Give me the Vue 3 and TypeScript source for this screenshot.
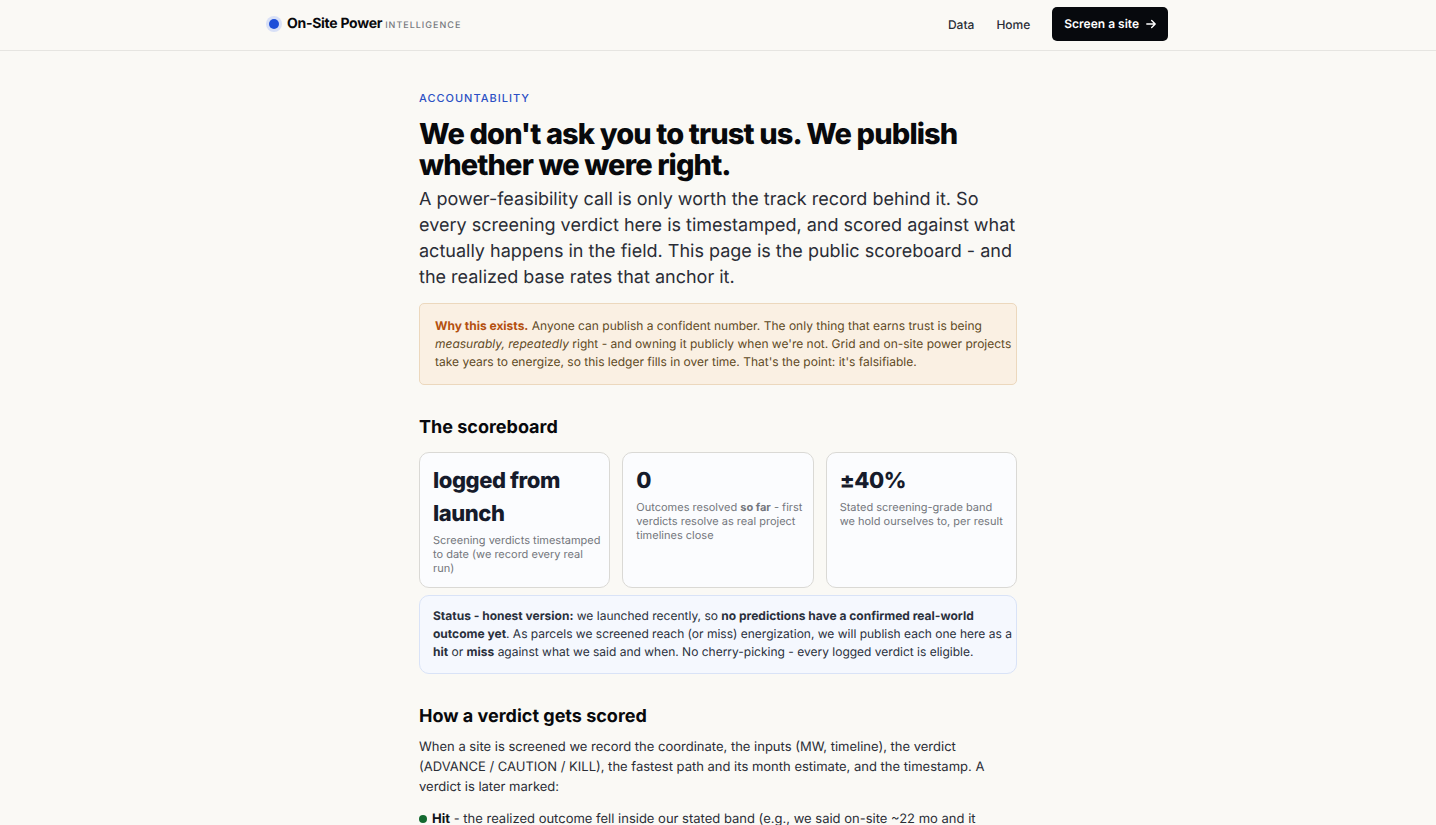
<script setup lang="ts">
interface Segment {
  text: string
  strong?: boolean
}

interface Stat {
  value: string
  label: Segment[]
}

const stats: Stat[] = [
  {
    value: 'logged from launch',
    label: [{ text: 'Screening verdicts timestamped to date (we record every real run)' }],
  },
  {
    value: '0',
    label: [
      { text: 'Outcomes resolved ' },
      { text: 'so far', strong: true },
      { text: ' - first verdicts resolve as real project timelines close' },
    ],
  },
  {
    value: '±40%',
    label: [{ text: 'Stated screening-grade band we hold ourselves to, per result' }],
  },
]
</script>

<template>
  <div class="page">
    <header class="site-header">
      <div class="header-inner">
        <a class="brand" href="#">
          <span class="brand-dot"></span>
          <span class="brand-text">
            <span class="brand-name">On-Site Power</span>
            <span class="brand-sub">Intelligence</span>
          </span>
        </a>
        <nav class="nav">
          <a class="nav-link" href="#">Data</a>
          <a class="nav-link" href="#">Home</a>
          <a class="cta" href="#">
            Screen a site
            <svg class="arrow" viewBox="0 0 10 10" aria-hidden="true">
              <path d="M0.8 5H9.2M5.7 1.6L9.2 5L5.7 8.4" />
            </svg>
          </a>
        </nav>
      </div>
    </header>

    <main class="content">
      <p class="eyebrow">Accountability</p>
      <h1>We don't ask you to trust us. We publish whether we were right.</h1>
      <p class="lead">
        A power-feasibility call is only worth the track record behind it. So every screening verdict
        here is timestamped, and scored against what actually happens in the field. This page is the
        public scoreboard - and the realized base rates that anchor it.
      </p>

      <p class="callout">
        <strong>Why this exists.</strong> Anyone can publish a confident number. The only thing that
        earns trust is being <em>measurably, repeatedly</em> right - and owning it publicly when we're
        not. Grid and on-site power projects take years to energize, so this ledger fills in over time.
        That's the point: it's falsifiable.
      </p>

      <section>
        <h2>The scoreboard</h2>
        <div class="stats">
          <div v-for="stat in stats" :key="stat.value" class="stat">
            <div class="stat-value">{{ stat.value }}</div>
            <div class="stat-label">
              <template v-for="part in stat.label" :key="part.text"
                ><strong v-if="part.strong">{{ part.text }}</strong
                ><template v-else>{{ part.text }}</template></template
              >
            </div>
          </div>
        </div>
        <p class="status">
          <strong>Status - honest version:</strong> we launched recently, so
          <strong>no predictions have a confirmed real-world outcome yet</strong>. As parcels we screened
          reach (or miss) energization, we will publish each one here as a <strong>hit</strong> or
          <strong>miss</strong> against what we said and when. No cherry-picking - every logged verdict
          is eligible.
        </p>
      </section>

      <section>
        <h2>How a verdict gets scored</h2>
        <p class="body-text">
          When a site is screened we record the coordinate, the inputs (MW, timeline), the verdict
          (ADVANCE / CAUTION / KILL), the fastest path and its month estimate, and the timestamp. A
          verdict is later marked:
        </p>
        <ul class="outcomes">
          <li>
            <span class="dot"></span><strong>Hit</strong> - the realized outcome fell inside our stated
            band (e.g., we said on-site ~22 mo and it
          </li>
        </ul>
      </section>
    </main>
  </div>
</template>

<style>
html,
body {
  background: #faf9f5;
}
body {
  margin: 0;
  overflow: hidden;
}
</style>

<style scoped>
.page {
  height: 100vh;
  overflow: hidden;
  background: #faf9f5;
  color: #2a2d35;
  font-family: Inter, 'Liberation Sans', sans-serif;
  text-rendering: geometricPrecision;
}
p,
h1,
h2,
ul {
  margin: 0;
}
a {
  color: inherit;
  text-decoration: none;
}
.site-header {
  padding: 7px 24px 9px;
  border-bottom: 1px solid #e6e5e1;
}
.header-inner {
  display: flex;
  justify-content: space-between;
  align-items: center;
  max-width: 904px;
  margin: 0 auto;
  box-sizing: border-box;
  padding: 0 2px 0 1px;
}
.brand {
  display: flex;
  align-items: center;
  gap: 8px;
  padding-left: 2px;
  line-height: 20px;
}
.brand-dot {
  width: 10px;
  height: 10px;
  border-radius: 50%;
  background: #1d4ed8;
  box-shadow: 0 0 0 3px #d8e0f6;
}
.brand-text {
  display: flex;
  align-items: baseline;
  gap: 3px;
  padding-top: 1px;
}
.brand-name {
  color: #08090c;
  font-size: 14px;
  font-weight: 700;
  letter-spacing: -0.02em;
}
.brand-sub {
  color: #777a80;
  font-size: 9px;
  font-weight: 500;
  letter-spacing: 1px;
  text-transform: uppercase;
}
.nav {
  display: flex;
  align-items: center;
  gap: 22px;
  font-size: 12px;
  font-weight: 500;
}
.cta {
  display: flex;
  align-items: center;
  gap: 7px;
  padding: 0 12px;
  border-radius: 5px;
  background: #07090d;
  color: #fff;
  font-size: 12px;
  font-weight: 600;
  line-height: 34px;
}
.arrow {
  width: 10px;
  height: 10px;
  fill: none;
  stroke: currentColor;
  stroke-width: 1.4;
  stroke-linecap: round;
  stroke-linejoin: round;
}
.content {
  max-width: 598px;
  margin: 0 auto;
  padding: 40px 24px;
}
.eyebrow {
  color: #2b50c4;
  font-size: 11px;
  font-weight: 500;
  line-height: 15px;
  letter-spacing: 1px;
  text-transform: uppercase;
}
h1 {
  margin-top: 12px;
  color: #08090c;
  font-size: 29px;
  font-weight: 800;
  line-height: 31px;
  letter-spacing: -0.03em;
}
.lead {
  margin-top: 7px;
  font-size: 18px;
  line-height: 26px;
}
.callout {
  margin-top: 12px;
  padding: 13px 3px 13px 15px;
  border: 1px solid #ecd8bd;
  border-radius: 5px;
  background: #faf0e3;
  color: #5f4a1f;
  font-size: 12px;
  line-height: 18px;
}
.callout strong {
  color: #b4500f;
  font-weight: 700;
}
h2 {
  margin-top: 31px;
  color: #08090c;
  font-size: 18px;
  font-weight: 700;
  line-height: 24px;
}
.stats {
  display: grid;
  grid-template-columns: repeat(3, 1fr);
  gap: 12px;
  margin-top: 12px;
}
.stat {
  padding: 12px 7px 12px 13px;
  border: 1px solid #dad9d5;
  border-radius: 10px;
  background: #fbfcfe;
}
.stat-value {
  color: #161b2b;
  font-size: 22px;
  font-weight: 800;
  line-height: 33px;
  letter-spacing: -0.02em;
}
.stat-label {
  margin-top: 2px;
  color: #73767c;
  font-size: 11px;
  line-height: 14px;
}
.status {
  margin-top: 7px;
  padding: 11px 2px 12px 13px;
  border: 1px solid #d9e3f7;
  border-radius: 10px;
  background: #f5f8fe;
  color: #2a303c;
  font-size: 12px;
  line-height: 18px;
}
.body-text {
  margin-top: 8px;
  font-size: 13px;
  line-height: 20px;
}
.outcomes {
  margin-top: 12px;
  padding: 0;
  list-style: none;
  font-size: 13px;
  line-height: 20px;
}
.outcomes strong {
  color: #111318;
}
.dot {
  display: inline-block;
  width: 8px;
  height: 8px;
  margin-right: 5px;
  border-radius: 50%;
  background: #14692f;
}
</style>
